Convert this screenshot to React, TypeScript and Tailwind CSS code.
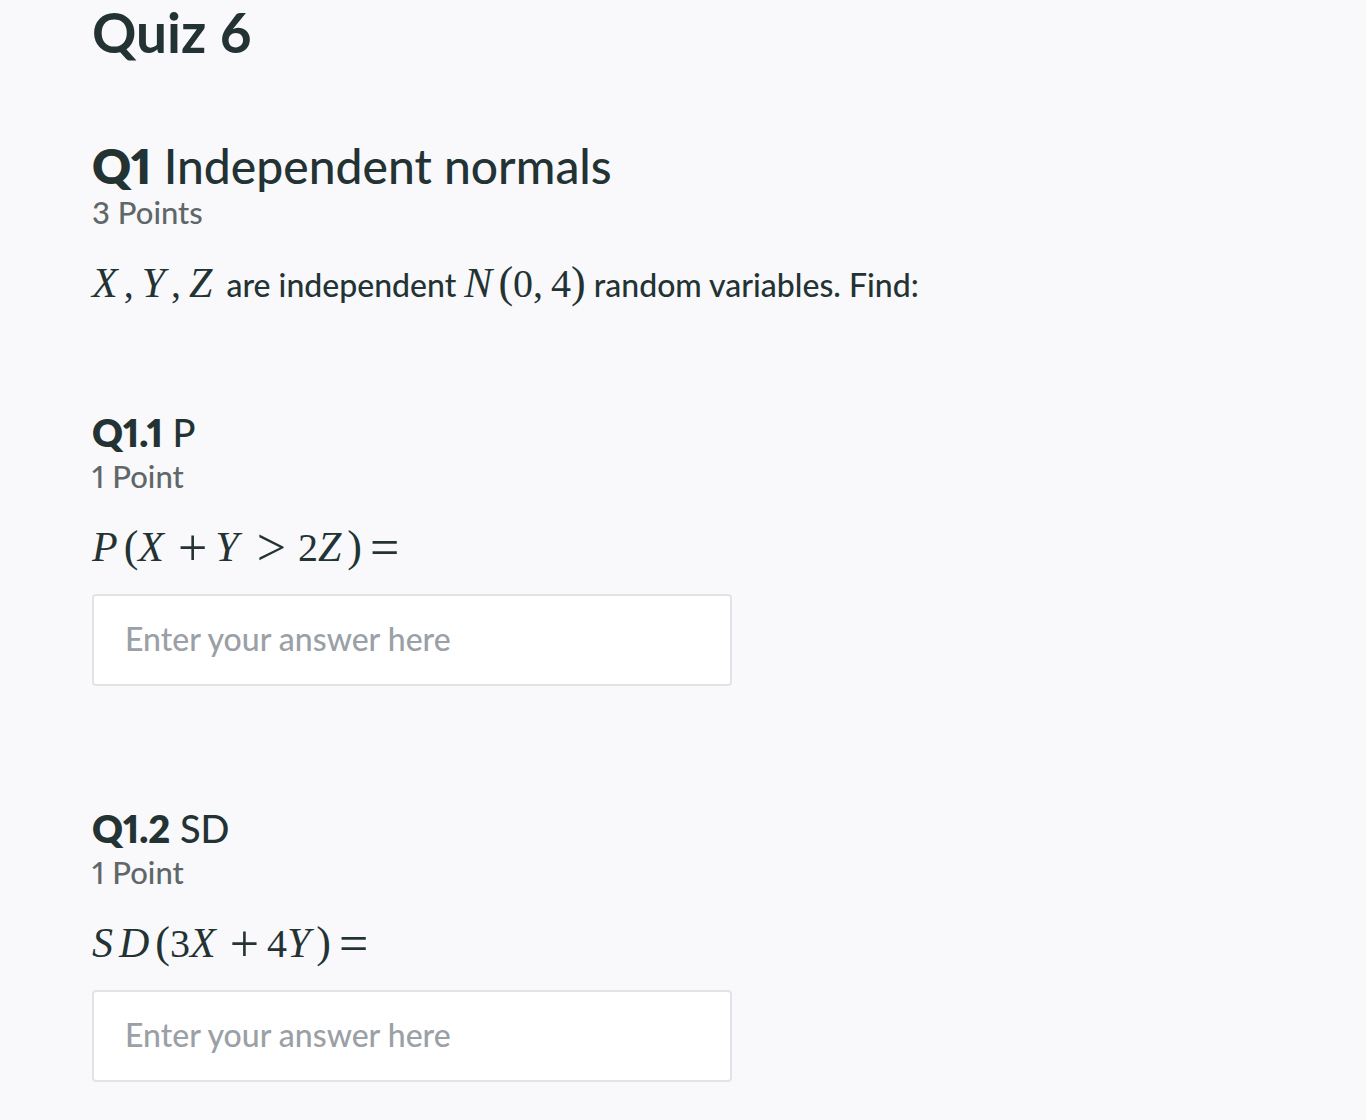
import { ReactNode } from "react";

const Var = ({ children }: { children: ReactNode }) => (
  <i className="pr-1.5 text-[42px] leading-none italic">{children}</i>
);

const Paren = ({ children }: { children: ReactNode }) => (
  <span className="text-[44px] leading-none">{children}</span>
);

const Comma = () => <span className="mr-2">,</span>;

const Operator = ({ children }: { children: ReactNode }) => (
  <span className="mx-2 self-center text-[52px] leading-none">{children}</span>
);

const Relation = ({ children }: { children: ReactNode }) => (
  <span className="mx-3 self-center text-[52px] leading-none">{children}</span>
);

const Formula = ({ children }: { children: ReactNode }) => (
  <span className="inline-flex h-12 items-baseline font-['Liberation_Serif',serif] text-[40px] leading-[48px] font-normal">
    {children}
  </span>
);

const QuestionPart = ({
  id,
  title,
  points,
  formula,
}: {
  id: string;
  title: string;
  points: string;
  formula: ReactNode;
}) => {
  const inputId = `answer-${id}`;

  return (
    <section className="flex flex-col">
      <h3 className="text-[38px] leading-[48px] proportional-nums">
        <span className="font-extrabold">{id}</span> {title}
      </h3>
      <p className="text-[31px] leading-[40px] text-[#5f6769] proportional-nums">
        {points}
      </p>
      <label htmlFor={inputId} className="mt-7 flex">
        {formula}
      </label>
      <input
        id={inputId}
        type="text"
        placeholder="Enter your answer here"
        className="mt-[22px] h-[92px] w-full max-w-[640px] rounded-sm border-2 border-[#e1e3e6] bg-white px-[31px] pb-1 text-[32px] placeholder:text-[#9b9fa6]"
      />
    </section>
  );
};

const App = () => (
  <main className="min-h-screen bg-[#f9f9fc] px-[92px] pb-[38px] font-['Lato',sans-serif] font-medium text-[#233333]">
    <h1 className="text-[55px] leading-[64px] font-bold">Quiz 6</h1>
    <section className="mt-[76px]">
      <h2 className="text-[48px] leading-[52px] proportional-nums">
        <span className="font-extrabold">Q1</span> Independent normals
      </h2>
      <p className="text-[31px] leading-[40px] text-[#5f6769]">3 Points</p>
      <p className="mt-7 text-[32px] leading-[48px]">
        <Formula>
          <Var>X</Var>
          <Comma />
          <Var>Y</Var>
          <Comma />
          <Var>Z</Var>
        </Formula>{" "}
        are independent{" "}
        <Formula>
          <Var>N</Var>
          <Paren>(</Paren>0<Comma />4<Paren>)</Paren>
        </Formula>{" "}
        random variables. Find:
      </p>
    </section>
    <div className="mt-[99px] flex flex-col gap-[118px]">
      <QuestionPart
        id="Q1.1"
        title="P"
        points="1 Point"
        formula={
          <Formula>
            <Var>P</Var>
            <Paren>(</Paren>
            <Var>X</Var>
            <Operator>+</Operator>
            <Var>Y</Var>
            <Relation>&gt;</Relation>2<Var>Z</Var>
            <Paren>)</Paren>
            <Operator>=</Operator>
          </Formula>
        }
      />
      <QuestionPart
        id="Q1.2"
        title="SD"
        points="1 Point"
        formula={
          <Formula>
            <Var>S</Var>
            <Var>D</Var>
            <Paren>(</Paren>3<Var>X</Var>
            <Operator>+</Operator>4<Var>Y</Var>
            <Paren>)</Paren>
            <Operator>=</Operator>
          </Formula>
        }
      />
    </div>
  </main>
);

export default App;
